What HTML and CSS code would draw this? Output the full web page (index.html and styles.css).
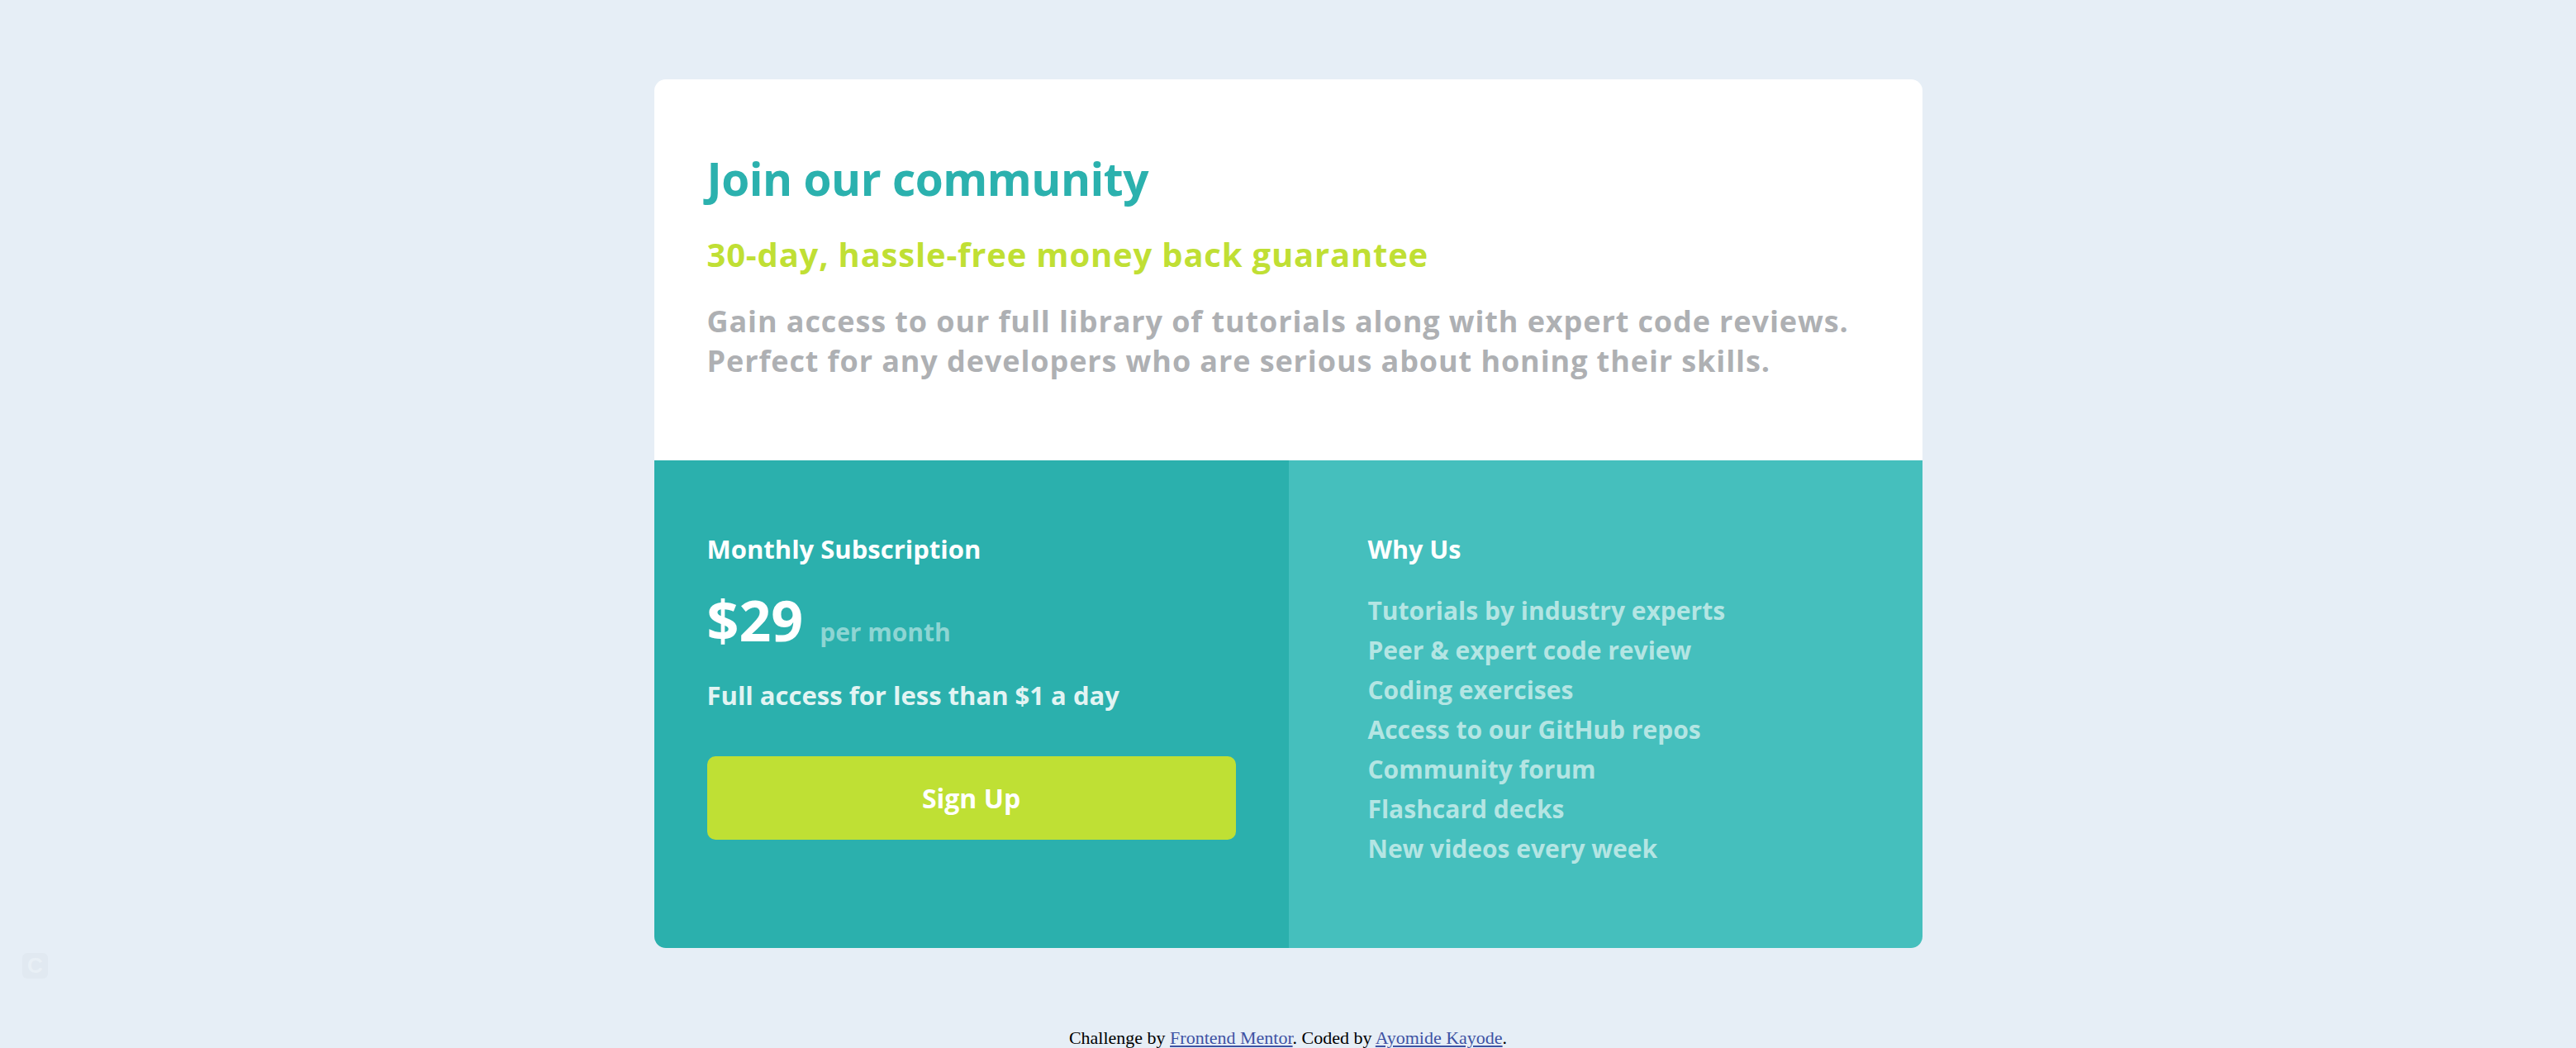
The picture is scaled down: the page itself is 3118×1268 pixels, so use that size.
FILE: index.html
```html
<!DOCTYPE html>
<html lang="en">
<head>
<meta charset="utf-8">
<title>Single Price Grid</title>
<link rel="stylesheet" href="styles.css">
</head>
<body>
<main class="card">
  <section class="intro">
    <h1 class="title">Join our community</h1>
    <h2 class="guarantee">30-day, hassle-free money back guarantee</h2>
    <p class="desc">Gain access to our full library of tutorials along with expert code reviews. Perfect for any developers who are serious about honing their skills.</p>
  </section>
  <section class="bottom">
    <div class="plan">
      <h3 class="col-title">Monthly Subscription</h3>
      <div class="price-row">
        <span class="price">$29</span>
        <span class="period">per month</span>
      </div>
      <p class="access">Full access for less than $1 a day</p>
      <button class="signup" type="button">Sign Up</button>
    </div>
    <div class="why">
      <h3 class="col-title col-title-why">Why Us</h3>
      <ul class="reasons">
        <li>Tutorials by industry experts</li>
        <li>Peer &amp; expert code review</li>
        <li>Coding exercises</li>
        <li>Access to our GitHub repos</li>
        <li>Community forum</li>
        <li>Flashcard decks</li>
        <li>New videos every week</li>
      </ul>
    </div>
  </section>
</main>
<footer class="attribution">
  Challenge by <a href="#">Frontend Mentor</a>. Coded by <a href="#">Ayomide Kayode</a>.
</footer>
<div class="ext-badge"><span>C</span></div>
</body>
</html>
```
FILE: styles.css
```css
* { box-sizing: border-box; }

html, body {
  margin: 0;
  padding: 0;
}

body {
  background: #e6eef6;
  font-family: "Open Sans", "Liberation Sans", sans-serif;
  font-weight: 700;
  padding-top: 96px;
}

.card {
  width: 1535px;
  margin: 0 auto;
  border-radius: 14px;
  overflow: hidden;
  background: #ffffff;
}

.intro {
  padding: 87px 64px 96px 64px;
}

.title {
  margin: 0;
  font-size: 55px;
  line-height: 66px;
  font-weight: 700;
  color: #2bb1ae;
  letter-spacing: -0.5px;
}

.guarantee {
  margin: 35px 0 0 0;
  font-size: 40px;
  line-height: 48px;
  font-weight: 700;
  color: #c0df34;
  letter-spacing: 0.8px;
}

.desc {
  margin: 33px 0 0 0;
  font-size: 36px;
  line-height: 48px;
  font-weight: 700;
  color: #aeb0b3;
  letter-spacing: 0.9px;
}

.bottom {
  display: grid;
  grid-template-columns: 768px 1fr;
}

.plan {
  background: #2bb0ad;
  padding: 87px 64px 97px 64px;
}

.why {
  background: #45bfbd;
  padding: 87px 64px 96px 96px;
}

.col-title {
  margin: 0;
  font-size: 31px;
  line-height: 40px;
  font-weight: 700;
  color: #ffffff;
}

.col-title-why {
  font-size: 30.5px;
}

.price-row {
  display: flex;
  align-items: baseline;
  gap: 20px;
  margin-top: 26px;
  height: 80px;
}

.price {
  font-size: 68px;
  line-height: 80px;
  color: #ffffff;
}

.period {
  font-size: 30px;
  color: #8ed5d3;
}

.access {
  margin: 31px 0 0 0;
  font-size: 31px;
  line-height: 40px;
  color: #e2f4f3;
}

.signup {
  display: block;
  width: 100%;
  height: 101px;
  margin-top: 54px;
  border: none;
  border-radius: 10px;
  background: #bfe034;
  color: #ffffff;
  font-family: inherit;
  font-size: 32px;
  font-weight: 700;
  cursor: pointer;
}

.reasons {
  list-style: none;
  margin: 31px 0 0 0;
  padding: 0;
}

.reasons li {
  font-size: 30px;
  line-height: 48px;
  color: #b4e5e3;
}

.attribution {
  margin-top: 96px;
  text-align: center;
  font-family: "Liberation Serif", serif;
  font-weight: 400;
  font-size: 22px;
  color: #000000;
}

.attribution a {
  color: #3e52a3;
}

.ext-badge {
  position: absolute;
  left: 27px;
  top: 1153px;
  width: 31px;
  height: 31px;
  border-radius: 6px;
  background: #e1e9f1;
  display: flex;
  align-items: center;
  justify-content: center;
}

.ext-badge span {
  font-family: "Liberation Sans", sans-serif;
  font-size: 26px;
  font-weight: 700;
  color: #e9f0f6;
}
```
